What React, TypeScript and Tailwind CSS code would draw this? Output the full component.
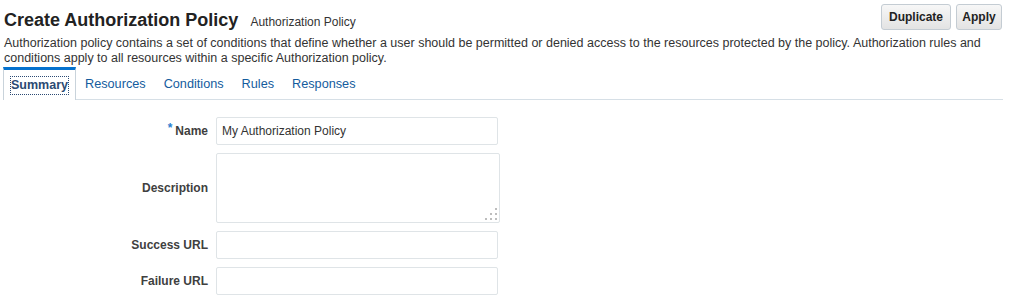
import React from 'react';

const tabs = ['Summary', 'Resources', 'Conditions', 'Rules', 'Responses'];

function Field({ label, required, children }: { label: string; required?: boolean; children: React.ReactNode }) {
  return (
    <div className="flex items-center">
      <div className="w-[208px] text-right text-xs font-bold text-[#404040]">
        {required && <span className="text-[#2b7fd0] relative top-[-3px] mr-[3px]">*</span>}
        {label}
      </div>
      <div className="ml-[8px]">{children}</div>
    </div>
  );
}

export default function App() {
  return (
    <div className="w-[1010px] h-[301px] bg-white overflow-hidden font-['Liberation_Sans',Arial,sans-serif] text-[#333]">
      {/* ── Header ── */}
      <div className="flex items-start justify-between pt-[4px] pl-[4px] pr-[8px]">
        <div className="mt-[5px] flex items-baseline">
          <h1 className="text-[18px] leading-[22px] font-bold text-[#222]">Create Authorization Policy</h1>
          <span className="ml-[12px] text-xs text-[#333]">Authorization Policy</span>
        </div>
        <div className="flex gap-[5px]">
          <button className="w-[70px] h-[26px] rounded-[3px] border border-[#c4ccd3] bg-gradient-to-b from-[#f7f7f7] to-[#e3e3e3] text-xs font-bold text-[#222]">
            Duplicate
          </button>
          <button className="w-[46px] h-[26px] rounded-[3px] border border-[#c4ccd3] bg-gradient-to-b from-[#f7f7f7] to-[#e3e3e3] text-xs font-bold text-[#222]">
            Apply
          </button>
        </div>
      </div>

      <p className="mt-[5px] px-[4px] text-[12.5px] leading-[15px] text-[#333]">
        Authorization policy contains a set of conditions that define whether a user should be permitted or denied access to the resources protected by the policy. Authorization rules and
        <br />
        conditions apply to all resources within a specific Authorization policy.
      </p>

      {/* ── Tabs ── */}
      <div className="mt-[1px] ml-[3px] w-[1000px] flex border-b border-[#d6dfe6]">
        {tabs.map((t, i) =>
          i === 0 ? (
            <div
              key={t}
              className="h-[33px] -mb-[1px] bg-white border-t-[3px] border-t-[#0572ce] border-x border-x-[#c9d3db] px-[7px] flex items-center"
            >
              <span className="text-[12.5px] font-bold text-[#2c4a73] outline-1 outline-dotted outline-[#2c4a73] leading-[17px]">
                {t}
              </span>
            </div>
          ) : (
            <div key={t} className="h-[32px] pt-[3px] px-[9px] flex items-center text-[12.7px] text-[#145c9e]">
              {t}
            </div>
          )
        )}
      </div>

      {/* ── Form ── */}
      <div className="pt-[17px] flex flex-col gap-[8px]">
        <Field label="Name" required>
          <div className="w-[282px] h-[28px] border border-[#dfe4e7] rounded-[2px] px-[5px] flex items-center text-xs text-[#333]">
            My Authorization Policy
          </div>
        </Field>
        <Field label="Description">
          <div className="relative w-[284px] h-[70px] border border-[#dfe4e7] rounded-[2px]">
            <svg className="absolute right-[1px] bottom-[1px]" width="13" height="13" viewBox="0 0 13 13">
              <rect x="10" y="0" width="2" height="2" fill="#bdbdbd" />
              <rect x="5" y="5" width="2" height="2" fill="#bdbdbd" />
              <rect x="10" y="5" width="2" height="2" fill="#bdbdbd" />
              <rect x="0" y="10" width="2" height="2" fill="#bdbdbd" />
              <rect x="5" y="10" width="2" height="2" fill="#bdbdbd" />
              <rect x="10" y="10" width="2" height="2" fill="#bdbdbd" />
            </svg>
          </div>
        </Field>
        <Field label="Success URL">
          <div className="w-[282px] h-[28px] border border-[#dfe4e7] rounded-[2px]" />
        </Field>
        <Field label="Failure URL">
          <div className="w-[282px] h-[28px] border border-[#dfe4e7] rounded-[2px]" />
        </Field>
      </div>
    </div>
  );
}
